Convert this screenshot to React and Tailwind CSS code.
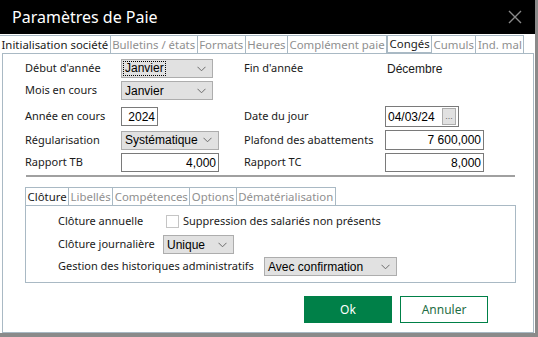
import React from 'react'

const ui = { fontFamily: "'Noto Sans', 'Open Sans', sans-serif" }
const field = { fontFamily: "'Liberation Sans', Arial, sans-serif" }

function Chevron() {
  return (
    <svg width="9" height="6" viewBox="0 0 9 6" className="shrink-0">
      <path d="M0.5 0.8 L4.5 4.8 L8.5 0.8" fill="none" stroke="#6b6b6b" strokeWidth="1" />
    </svg>
  )
}

function Select({ value, w, focus }) {
  return (
    <div className={`${w} h-[19px] flex items-center justify-between bg-[#e1e1e1] border border-[#adadad] pl-[2px] pr-[6px] text-[12px] text-black whitespace-nowrap`} style={field}>
      <span className={focus ? 'outline-1 outline-dotted outline-black px-px leading-[13px]' : 'px-px'}>{value}</span>
      <Chevron />
    </div>
  )
}

function Input({ value, w }) {
  return (
    <div className={`${w} h-[19px] flex items-center justify-end bg-white border border-[#7a7a7a] pr-[2px] text-[12px] text-black`} style={field}>
      {value}
    </div>
  )
}

function Tab({ label, active, hover }) {
  const base = 'h-[18px] px-[1.5px] flex items-center text-[11.4px] border-t border-r border-[#a9b9c4] whitespace-nowrap'
  if (active) return <div className={`${base} border-l bg-white text-[#1a1a1a] h-[19px] -mb-px`}>{label}</div>
  if (hover) return <div className={`${base} border border-[#107c41] text-[#1a1a1a] bg-white`}>{label}</div>
  return <div className={`${base} text-[#8f8f8f] bg-white`}>{label}</div>
}

export default function App() {
  const tabs = ['Bulletins / états', 'Formats', 'Heures', 'Complément paie']
  return (
    <div className="w-[538px] h-[337px] bg-white overflow-hidden flex flex-col border-r-[3px] border-b-[4px] border-[#8a8a8a] text-[11px] whitespace-nowrap" style={ui}>
      {/* Title bar */}
      <div className="h-[34px] shrink-0 bg-black flex items-center justify-between pl-[12px] pr-[13px]">
        <span className="text-white text-[16px] leading-none">Paramètres de Paie</span>
        <svg width="14" height="14" viewBox="0 0 14 14">
          <path d="M1 1 L13 13 M13 1 L1 13" stroke="#8a8a8a" strokeWidth="1.4" />
        </svg>
      </div>

      {/* Main tabs */}
      <div className="flex items-end pt-px -ml-px pr-[11px]">
        <Tab label="Initialisation société" active />
        {tabs.map(t => <Tab key={t} label={t} />)}
        <Tab label="Congés" hover />
        <Tab label="Cumuls" />
        <Tab label="Ind. mal" />
      </div>

      {/* Panel */}
      <div className="flex-1 ml-[2px] mr-[1px] border border-[#a9b9c4] flex flex-col pl-[22px] pt-[5px] text-[#1a1a1a]">
        <div className="flex items-center h-[19px]">
          <span className="w-[96px]">Début d'année</span>
          <div className="w-[123px]"><Select value="Janvier" w="w-[92px]" focus /></div>
          <span className="w-[141px]">Fin d'année</span>
          <span className="pl-[2px] text-[12px]" style={field}>Décembre</span>
        </div>
        <div className="flex items-center h-[19px] mt-[3px]">
          <span className="w-[96px]">Mois en cours</span>
          <Select value="Janvier" w="w-[92px]" />
        </div>
        <div className="flex items-center h-[21px] mt-[6px]">
          <span className="w-[96px]">Année en cours</span>
          <div className="w-[123px]"><Input value="2024" w="w-[37px]" /></div>
          <span className="w-[141px]">Date du jour</span>
          <div className="w-[74px] h-[21px] border border-[#7a7a7a] bg-white flex items-center justify-between pl-[2px] pr-[2px] text-[12px] text-black" style={field}>
            <span>04/03/24</span>
            <span className="w-[14px] h-[17px] bg-[#e1e1e1] border border-[#adadad] text-[9px] text-[#6b6b6b] leading-[14px] text-center">...</span>
          </div>
        </div>
        <div className="flex items-center h-[20px] mt-[3px]">
          <span className="w-[96px]">Régularisation</span>
          <div className="w-[123px]"><Select value="Systématique" w="w-[98px]" /></div>
          <span className="w-[141px]">Plafond des abattements</span>
          <Input value="7 600,000" w="w-[99px] h-[20px]" />
        </div>
        <div className="flex items-center h-[19px] mt-[3px]">
          <span className="w-[96px]">Rapport TB</span>
          <div className="w-[123px]"><Input value="4,000" w="w-[98px]" /></div>
          <span className="w-[141px]">Rapport TC</span>
          <Input value="8,000" w="w-[99px]" />
        </div>

        <div className="h-[2px] bg-[#a0a0a0] w-[489px] ml-[1px] mt-[3px]" />

        {/* Inner tabs */}
        <div className="flex items-end mt-[10px] w-[491px]">
          <Tab label="Clôture" active />
          <Tab label="Libellés" />
          <Tab label="Compétences" />
          <Tab label="Options" />
          <Tab label="Dématérialisation" />
        </div>
        <div className="w-[491px] h-[78px] border border-[#a9b9c4] pl-[32px] pt-[7px] flex flex-col">
          <div className="flex items-center h-[16px]">
            <span className="w-[108px]">Clôture annuelle</span>
            <span className="w-[13px] h-[13px] border border-[#c5c5c5] bg-white mr-[4px]" />
            <span>Suppression des salariés non présents</span>
          </div>
          <div className="flex items-center h-[19px] mt-[6px]">
            <span className="w-[105px]">Clôture journalière</span>
            <Select value="Unique" w="w-[71px]" />
          </div>
          <div className="flex items-center h-[19px] mt-[3px]">
            <span className="w-[206px]">Gestion des historiques administratifs</span>
            <Select value="Avec confirmation" w="w-[133px]" />
          </div>
        </div>

        {/* Buttons */}
        <div className="flex justify-end gap-[8px] mt-[13px] pr-[45px]">
          <button className="w-[88px] h-[27px] bg-[#008048] text-white text-[12px]">Ok</button>
          <button className="w-[88px] h-[27px] bg-white border border-[#008048] text-[#1f6e45] text-[12px]">Annuler</button>
        </div>
      </div>
    </div>
  )
}
